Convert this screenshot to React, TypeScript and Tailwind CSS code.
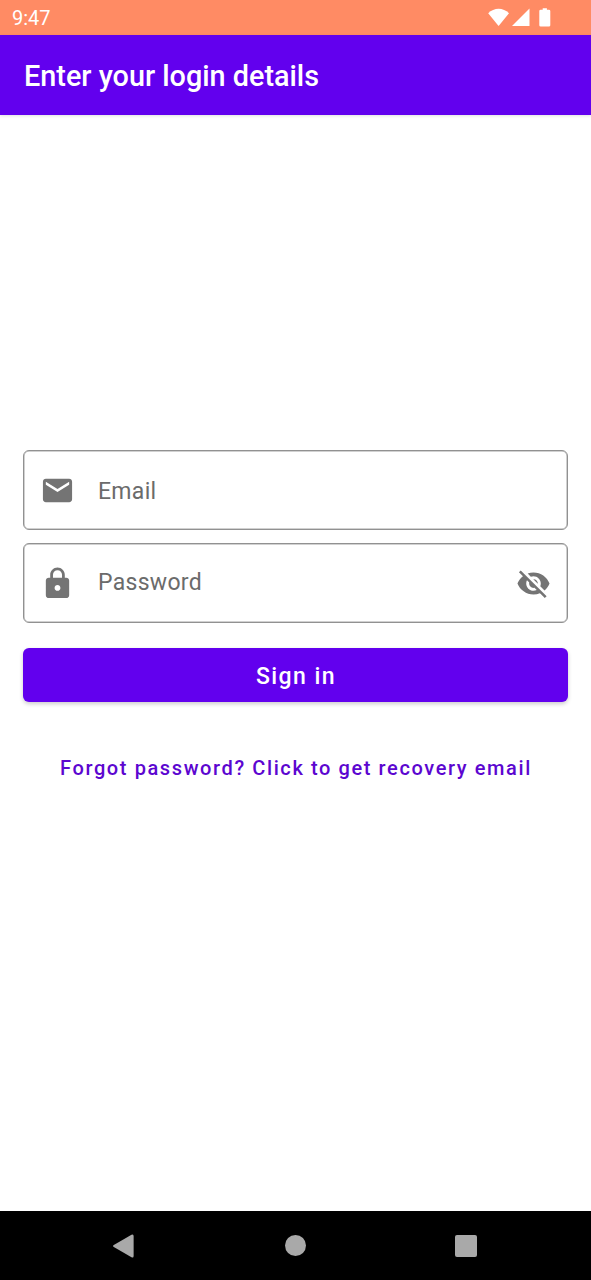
import React from "react";

function Icon({ d, className }: { d: string; className: string }) {
  return (
    <svg viewBox="0 0 24 24" fill="currentColor" className={className}>
      <path d={d} />
    </svg>
  );
}

const MAIL =
  "M20 4H4c-1.1 0-1.99.9-1.99 2L2 18c0 1.1.9 2 2 2h16c1.1 0 2-.9 2-2V6c0-1.1-.9-2-2-2zm0 4l-8 5-8-5V6l8 5 8-5v2z";
const LOCK =
  "M18 8h-1V6c0-2.76-2.24-5-5-5S7 3.24 7 6v2H6c-1.1 0-2 .9-2 2v10c0 1.1.9 2 2 2h12c1.1 0 2-.9 2-2V10c0-1.1-.9-2-2-2zm-6 9c-1.1 0-2-.9-2-2s.9-2 2-2 2 .9 2 2-.9 2-2 2zm3.1-9H8.9V6c0-1.71 1.39-3.1 3.1-3.1 1.71 0 3.1 1.39 3.1 3.1v2z";
const EYE_OFF =
  "M12 7c2.76 0 5 2.24 5 5 0 .65-.13 1.26-.36 1.83l2.92 2.92c1.51-1.26 2.7-2.89 3.43-4.75-1.73-4.39-6-7.5-11-7.5-1.4 0-2.74.25-3.98.7l2.16 2.16C10.74 7.13 11.35 7 12 7zM2 4.27l2.28 2.28.46.46C3.08 8.3 1.78 10.02 1 12c1.73 4.39 6 7.5 11 7.5 1.55 0 3.03-.3 4.38-.84l.42.42L19.73 22 21 20.73 3.27 3 2 4.27zM7.53 9.8l1.55 1.55c-.05.21-.08.43-.08.65 0 1.66 1.34 3 3 3 .22 0 .44-.03.65-.08l1.55 1.55c-.67.33-1.41.53-2.2.53-2.76 0-5-2.24-5-5 0-.79.2-1.53.53-2.2zm4.31-.78l3.15 3.15.02-.16c0-1.66-1.34-3-3-3l-.17.01z";

function StatusBar() {
  return (
    <div className="flex h-[35px] items-center justify-between bg-[#ff8b64] pl-3 pr-[39px] text-white">
      <span className="pt-px text-[20px] leading-6">9:47</span>
      <svg viewBox="0 0 64 20" fill="currentColor" className="h-5 w-16">
        <path d="M.2 5.2C6-.8 15.200-.8 21 5.200L10.600 18Z" />
        <path d="M24 18 41.500 .5V18Z" />
        <path d="M54.700 .3h4.200v1.400h2q1.400 0 1.400 1.400v14.100q0 1.400-1.400 1.400h-8.200q-1.400 0-1.400-1.400V3.100q0-1.400 1.400-1.400h2Z" />
      </svg>
    </div>
  );
}

function Field({ icon, children, trailing }: { icon: string; children: React.ReactNode; trailing?: string }) {
  return (
    <div className="flex h-20 items-center rounded-[6px] border border-[#919191] px-4 text-[#747474] shadow-[inset_0_0_0_0.5px_#a3a3a3]">
      <Icon d={icon} className="h-[35px] w-[35px] shrink-0" />
      <span className="ml-[23px] flex-1 text-[23px] leading-7 tracking-[0.3px] text-[#6b6b6b]">{children}</span>
      {trailing && <Icon d={trailing} className="h-[35px] w-[35px] shrink-0" />}
    </div>
  );
}

export default function App() {
  return (
    <div className="flex h-[1280px] w-[591px] flex-col bg-white font-['Roboto',sans-serif]">
      <StatusBar />
      <header className="flex h-20 items-center bg-[#6200ee] pl-6 pt-px shadow-[0_1px_3px_rgba(0,0,0,0.12)]">
        <h1 className="text-[28.8px] font-medium leading-9 text-white">Enter your login details</h1>
      </header>
      <main className="flex flex-1 flex-col px-[23px] pt-[335px]">
        <Field icon={MAIL}>
          <span className="block pt-[4px]">Email</span>
        </Field>
        <div className="h-[13px]" />
        <Field icon={LOCK} trailing={EYE_OFF}>
          Password
        </Field>
        <button className="mt-[25px] flex h-[54px] items-center justify-center rounded-[6px] bg-[#6200ee] pl-px pt-[4px] text-[23px] font-medium tracking-[1.45px] text-white shadow-[0_2px_4px_rgba(0,0,0,0.2)]">
          Sign in
        </button>
        <button className="mt-[54px] whitespace-nowrap pl-px text-center text-[20px] font-medium leading-6 tracking-[1.6px] text-[#5c06d0]">
          Forgot password? Click to get recovery email
        </button>
      </main>
      <nav className="flex h-[69px] items-center justify-between bg-black pl-[112px] pr-[114px] text-[#a9a9a9]">
        <svg viewBox="0 0 22 24" fill="currentColor" className="h-6 w-[22px]">
          <path d="M1.800 11 19.500 .8Q21.600-.2 21.600 2v20q0 2.200-2.100 1.200L1.800 13q-1.600-1 0-2Z" />
        </svg>
        <div className="ml-px h-[21px] w-[21px] rounded-full bg-[#a9a9a9]" />
        <div className="h-[22px] w-[22px] rounded-[2px] bg-[#a9a9a9]" />
      </nav>
    </div>
  );
}
